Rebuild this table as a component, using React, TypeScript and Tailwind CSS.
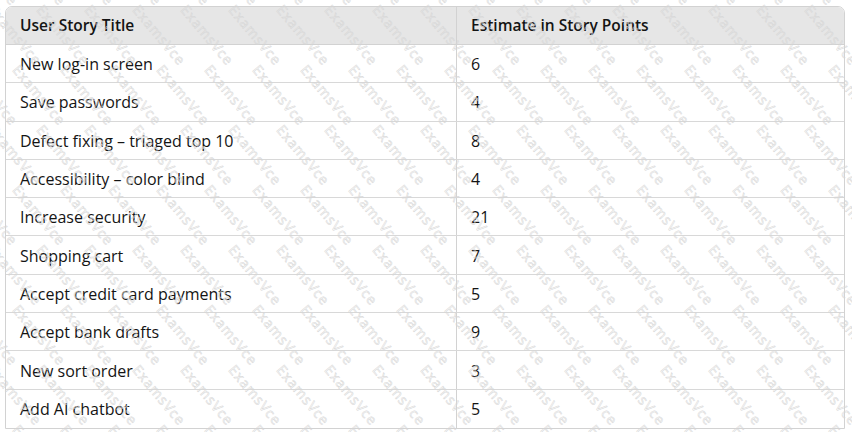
import React from "react";

const rows: [string, string][] = [
  ["New log-in screen", "6"],
  ["Save passwords", "4"],
  ["Defect fixing – triaged top 10", "8"],
  ["Accessibility – color blind", "4"],
  ["Increase security", "21"],
  ["Shopping cart", "7"],
  ["Accept credit card payments", "5"],
  ["Accept bank drafts", "9"],
  ["New sort order", "3"],
  ["Add AI chatbot", "5"],
];

function Watermark() {
  const items: { x: number; y: number }[] = [];
  for (let r = -2; r < 9; r++) {
    for (let c = -2; c < 20; c++) {
      items.push({ x: c * 48 + (r % 2 === 0 ? 0 : 24), y: r * 60 });
    }
  }
  return (
    <div aria-hidden="true" className="pointer-events-none absolute inset-0 overflow-hidden">
      {items.map((p, i) => (
        <span
          key={i}
          className="absolute whitespace-nowrap text-[14px] tracking-[1px] text-transparent [-webkit-text-stroke:0.5px_#d6d6d6] rotate-[50deg] origin-top-left font-['Open_Sans',sans-serif]"
          style={{ left: p.x, top: p.y }}
        >
          ExamsVce
        </span>
      ))}
    </div>
  );
}

export default function App() {
  return (
    <div className="relative w-[852px] h-[432px] bg-white overflow-hidden font-['Open_Sans',sans-serif] text-[#141414]">
      <div className="pt-[6px] pl-[5px] pr-[7px]">
        <div className="border border-[#d2d2d2] rounded-t-[7px] overflow-hidden">
          <div className="grid grid-cols-[451px_1fr] h-[38px] bg-[#e6e6e6] border-b border-[#d2d2d2] text-[15.5px] font-semibold">
            <div className="flex items-center pl-[14px] border-r border-[#d2d2d2]">User Story Title</div>
            <div className="flex items-center pl-[14px]">Estimate in Story Points</div>
          </div>
          {rows.map(([t, v], i) => (
            <div
              key={i}
              className={`grid grid-cols-[451px_1fr] h-[38.3px] text-[16px] ${i < rows.length - 1 ? "border-b border-[#d8d8d8]" : ""}`}
            >
              <div className="flex items-center pl-[14px] pt-[1px] border-r border-[#d2d2d2]">{t}</div>
              <div className="flex items-center pl-[14px] pt-[1px]">{v}</div>
            </div>
          ))}
        </div>
      </div>
      <Watermark />
    </div>
  );
}
